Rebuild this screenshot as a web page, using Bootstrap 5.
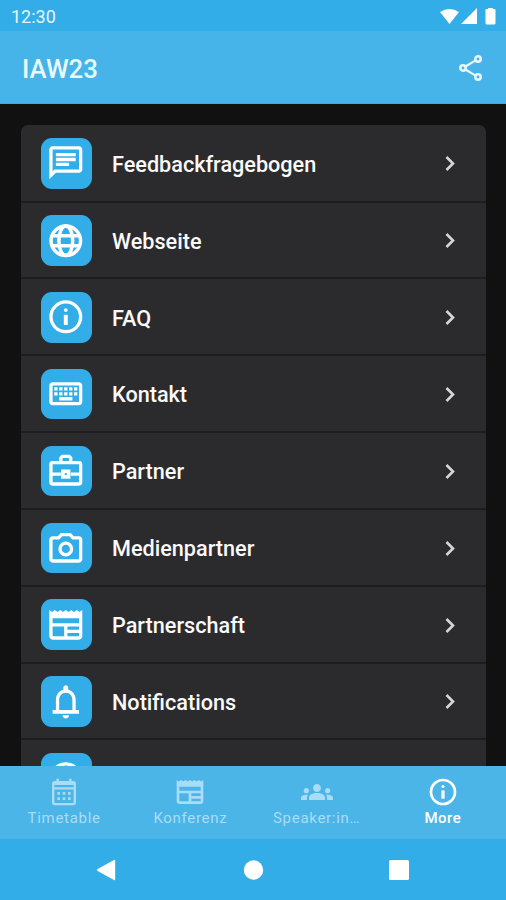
<!DOCTYPE html>
<html lang="de">
<head>
<meta charset="utf-8">
<meta name="viewport" content="width=device-width, initial-scale=1">
<title>IAW23</title>
<link href="https://cdn.jsdelivr.net/npm/bootstrap@5.3.0/dist/css/bootstrap.min.css" rel="stylesheet">
<style>
  body { font-family: Roboto, "Noto Sans", sans-serif; background: #111; }
  svg { display: block; fill: currentColor; flex: none; }
  .status-strip { height: 31px; background: #33ade8; padding: 2px 9px 0 11px; font-size: 18px; color: #e4f5fd; }
  .status-strip svg { color: #fff; }
  .top-bar { height: 73px; background: #46b4e8; padding: 2px 22px 0; color: #eaf8ff; border-bottom: 1px solid #3fa9dc; }
  .top-bar h1 { font-size: 25.8px; font-weight: 500; line-height: 1; padding-top: 3px; }
  .more-area { padding: 21px 20px 0 21px; min-height: 0; }
  .more-list { --bs-list-group-bg: #2b2b2d; --bs-list-group-color: #fff; --bs-list-group-border-width: 0; --bs-list-group-border-radius: 7px; }
  .more-list .list-group-item { height: 76.85px; padding: 1px 26px 0 20px; border-bottom: 2px solid #1d1d1e; font-size: 21.65px; font-weight: 500; color: #fafafa; }
  .more-list .list-group-item:first-child { height: 77.5px; }
  .more-list .item-label { padding-top: 3px; }
  .tile { width: 50.5px; height: 50.5px; border-radius: 11px; background: #33ade8; color: #fff; margin-right: 20.5px; }
  .tile svg { width: 39.6px; height: 39.6px; }
  .chev { color: #d6d6d6; }
  .tabs-bar { height: 73px; background: #4bb5e8; color: #a9dcf6; font-size: 15px; letter-spacing: .7px; padding: 10px 0 0 1px; }
  .tabs-bar .tab-link { width: 25%; line-height: 20px; color: inherit; text-decoration: none; }
  .tabs-bar svg { width: 32px; height: 32px; }
  .tabs-bar .current { color: #fff; font-weight: 500; letter-spacing: .5px; }
  .system-nav { height: 61px; background: #33ade8; color: #fff; }
</style>
</head>
<body>
<svg width="0" height="0" class="position-absolute" aria-hidden="true">
  <symbol id="chat" viewBox="0 0 24 24"><path d="M4 4h16v12H5.170L4 17.170V4m0-2c-1.100 0-1.990.9-1.990 2L2 22l4-4h14c1.100 0 2-.9 2-2V4c0-1.100-.9-2-2-2H4zm2 10h8v2H6v-2zm0-3h12v2H6V9zm0-3h12v2H6V6z"/></symbol>
  <symbol id="globe" viewBox="0 0 24 24"><g fill="none" stroke="currentColor" stroke-width="2.100"><circle cx="12" cy="12" r="8.950"/><ellipse cx="12" cy="12" rx="4.200" ry="8.950"/><path d="M3.500 9h17M3.500 15h17"/></g></symbol>
  <symbol id="info" viewBox="0 0 24 24"><circle cx="12" cy="12" r="9" fill="none" stroke="currentColor" stroke-width="2"/><circle cx="12" cy="7.900" r="1.150"/><path d="M10.800 10.800h2.400v6.200h-2.400z"/></symbol>
  <symbol id="keyboard" viewBox="0 0 24 24"><path d="M20 7v10H4V7h16m0-2H4c-1.100 0-1.990.9-1.990 2L2 17c0 1.100.9 2 2 2h16c1.100 0 2-.9 2-2V7c0-1.100-.9-2-2-2zm-9 3h2v2h-2zm0 3h2v2h-2zM8 8h2v2H8zm0 3h2v2H8zm-3 0h2v2H5zm0-3h2v2H5zm3 6h8v2H8zm6-3h2v2h-2zm0-3h2v2h-2zm3 3h2v2h-2zm0-3h2v2h-2z"/></symbol>
  <symbol id="case" viewBox="0 0 24 24"><g fill="none" stroke="currentColor" stroke-width="2"><rect x="3" y="7" width="18" height="13" rx="1"/><path d="M9 7V4.200L10 3.200h4l1 1V7M3 14h6M15 14h6"/><rect x="10.300" y="12.300" width="3.400" height="3.400" stroke-width="2.200"/></g></symbol>
  <symbol id="camera" viewBox="0 0 24 24"><path d="M14.120 5l1.830 2H20v12H4V7h4.050l1.830-2h4.240M15 3H9L7.170 5H4c-1.100 0-2 .9-2 2v12c0 1.100.9 2 2 2h16c1.100 0 2-.9 2-2V7c0-1.100-.9-2-2-2h-3.170L15 3z"/><circle cx="12" cy="12.700" r="3.500" fill="none" stroke="currentColor" stroke-width="2"/></symbol>
  <symbol id="paper" viewBox="0 0 24 24"><path d="M22 3l-1.670 1.200L18.670 3 17 4.200 15.330 3l-1.660 1.200L12 3l-1.670 1.200L8.670 3 7 4.200 5.330 3 3.670 4.200 2 3v16c0 1.100.9 2 2 2h16c1.100 0 2-.9 2-2V3zM11 19H4v-6h7v6zm9 0h-7v-2h7v2zm0-4h-7v-2h7v2zm0-4H4V8h16v3z"/></symbol>
  <symbol id="bell" viewBox="0 0 24 24"><path d="M12 22.200c1.100 0 2-.9 2-2h-4c0 1.100.9 2 2 2zM18 17v-6c0-3.070-1.630-5.640-4.500-6.320V3.500c0-.83-.67-1.500-1.500-1.500s-1.500.67-1.500 1.500v1.180C7.640 5.360 6 7.920 6 11v6H4v2.200h16V17h-2zm-2 0H8v-6c0-2.480 1.510-4.500 4-4.500s4 2.020 4 4.500v6z"/></symbol>
  <symbol id="calendar" viewBox="0 0 24 24"><path fill-rule="evenodd" d="M6.300 2h1.900v1.700h7.600V2h1.900v1.700H19c1.100 0 2 .9 2 2V20c0 1.100-.9 2-2 2H5c-1.100 0-2-.9-2-2V5.700c0-1.100.9-2 2-2h1.300zM4.800 6.700v1.700h14.400V6.700zM4.800 10.200V20.200h14.400V10.200z"/><path d="M7 12h2v2H7zM11 12h2v2h-2zM15 12h2v2h-2zM7 16h2v2H7zM11 16h2v2h-2zM15 16h2v2h-2z"/></symbol>
  <symbol id="groups" viewBox="0 0 24 24"><path d="M12 12.750c1.630 0 3.070.39 4.240.9 1.080.48 1.760 1.560 1.760 2.730V18H6v-1.610c0-1.180.68-2.260 1.760-2.730 1.170-.52 2.610-.91 4.240-.91zM4 13c1.100 0 2-.9 2-2s-.9-2-2-2-2 .9-2 2 .9 2 2 2zm1.130 1.100c-.37-.06-.74-.1-1.130-.1-.99 0-1.930.21-2.780.58C.48 14.900 0 15.620 0 16.430V18h4.500v-1.610c0-.83.23-1.610.63-2.290zM20 13c1.100 0 2-.9 2-2s-.9-2-2-2-2 .9-2 2 .9 2 2 2zm4 3.430c0-.81-.48-1.530-1.220-1.850-.85-.37-1.790-.58-2.780-.58-.39 0-.76.04-1.130.1.4.68.63 1.460.63 2.290V18H24v-1.570zM12 6c1.660 0 3 1.340 3 3s-1.340 3-3 3-3-1.340-3-3 1.340-3 3-3z"/></symbol>
  <symbol id="next" viewBox="0 0 20 20"><path d="M6.500 4l6.500 6.500L6.500 17" fill="none" stroke="currentColor" stroke-width="2.600"/></symbol>
</svg>

<div class="d-flex flex-column vh-100 overflow-hidden">
  <header class="flex-shrink-0">
    <div class="status-strip d-flex justify-content-between align-items-center">
      <span>12:30</span>
      <svg width="60" height="20" viewBox="0 0 60 20"><path d="M3 5Q12.500-1 22 5L12.500 17zM40 1v16H24zM51 2V1h5v1h1.500q1 0 1 1v13q0 1.500-1.500 1.500h-7q-1.500 0-1.500-1.500V3q0-1 1-1z"/></svg>
    </div>
    <div class="top-bar d-flex justify-content-between align-items-center">
      <h1 class="mb-0">IAW23</h1>
      <svg width="26" height="30" viewBox="0 0 26 30"><g fill="none" stroke="currentColor" stroke-width="2.500"><circle cx="5" cy="15" r="2.700"/><circle cx="20" cy="6" r="2.700"/><circle cx="20" cy="24" r="2.700"/><path d="M7.400 13.500l10.200-6.100M7.400 16.500l10.200 6.100" stroke-width="2.200"/></g></svg>
    </div>
  </header>

  <main class="more-area flex-fill overflow-hidden">
    <div class="list-group more-list">
      <a class="list-group-item d-flex align-items-center"><span class="tile d-flex align-items-center justify-content-center"><svg><use href="#chat"/></svg></span><span class="item-label flex-fill">Feedbackfragebogen</span><svg class="chev" width="20" height="20"><use href="#next"/></svg></a>
      <a class="list-group-item d-flex align-items-center"><span class="tile d-flex align-items-center justify-content-center"><svg><use href="#globe"/></svg></span><span class="item-label flex-fill">Webseite</span><svg class="chev" width="20" height="20"><use href="#next"/></svg></a>
      <a class="list-group-item d-flex align-items-center"><span class="tile d-flex align-items-center justify-content-center"><svg><use href="#info"/></svg></span><span class="item-label flex-fill">FAQ</span><svg class="chev" width="20" height="20"><use href="#next"/></svg></a>
      <a class="list-group-item d-flex align-items-center"><span class="tile d-flex align-items-center justify-content-center"><svg><use href="#keyboard"/></svg></span><span class="item-label flex-fill">Kontakt</span><svg class="chev" width="20" height="20"><use href="#next"/></svg></a>
      <a class="list-group-item d-flex align-items-center"><span class="tile d-flex align-items-center justify-content-center"><svg><use href="#case"/></svg></span><span class="item-label flex-fill">Partner</span><svg class="chev" width="20" height="20"><use href="#next"/></svg></a>
      <a class="list-group-item d-flex align-items-center"><span class="tile d-flex align-items-center justify-content-center"><svg><use href="#camera"/></svg></span><span class="item-label flex-fill">Medienpartner</span><svg class="chev" width="20" height="20"><use href="#next"/></svg></a>
      <a class="list-group-item d-flex align-items-center"><span class="tile d-flex align-items-center justify-content-center"><svg><use href="#paper"/></svg></span><span class="item-label flex-fill">Partnerschaft</span><svg class="chev" width="20" height="20"><use href="#next"/></svg></a>
      <a class="list-group-item d-flex align-items-center"><span class="tile d-flex align-items-center justify-content-center"><svg><use href="#bell"/></svg></span><span class="item-label flex-fill">Notifications</span><svg class="chev" width="20" height="20"><use href="#next"/></svg></a>
      <a class="list-group-item d-flex align-items-center"><span class="tile d-flex align-items-center justify-content-center"><svg><use href="#info"/></svg></span></a>
    </div>
  </main>

  <footer class="flex-shrink-0">
    <nav class="tabs-bar d-flex">
      <a href="#" class="tab-link d-flex flex-column align-items-center"><svg><use href="#calendar"/></svg><span>Timetable</span></a>
      <a href="#" class="tab-link d-flex flex-column align-items-center"><svg><use href="#paper"/></svg><span>Konferenz</span></a>
      <a href="#" class="tab-link d-flex flex-column align-items-center"><svg><use href="#groups"/></svg><span>Speaker:in…</span></a>
      <a href="#" class="tab-link current d-flex flex-column align-items-center"><svg><use href="#info"/></svg><span>More</span></a>
    </nav>
    <div class="system-nav d-flex justify-content-center align-items-center">
      <svg width="312" height="24" viewBox="0 0 312 24"><path d="M18.200 2.500v19q0 1.200-1.200.6L.6 13q-1.200-1 0-2L17 1.900q1.200-.6 1.200.6z"/><circle cx="156.500" cy="12" r="9.700"/><rect x="292" y="2" width="20" height="20" rx="1.500"/></svg>
    </div>
  </footer>
</div>
<script src="https://cdn.jsdelivr.net/npm/bootstrap@5.3.0/dist/js/bootstrap.bundle.min.js"></script>
</body>
</html>
